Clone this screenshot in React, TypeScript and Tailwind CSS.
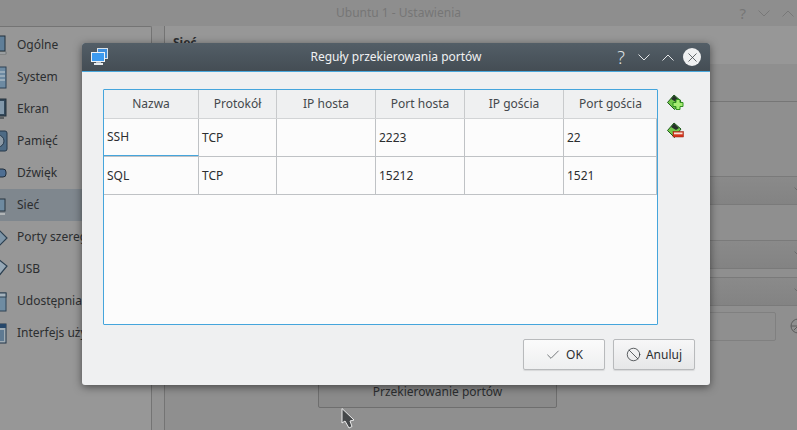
import type { ReactNode } from 'react';
import { Check, Ban, X } from 'lucide-react';

const navItems = ['Ogólne', 'System', 'Ekran', 'Pamięć', 'Dźwięk', 'Sieć', 'Porty szeregowe', 'USB', 'Udostępnianie', 'Interfejs użytkownika'];

const columns = [
  { label: 'Nazwa', width: 'w-[95px]' },
  { label: 'Protokół', width: 'w-[78px]' },
  { label: 'IP hosta', width: 'w-[99px]' },
  { label: 'Port hosta', width: 'w-[89px]' },
  { label: 'IP gościa', width: 'w-[99px]' },
  { label: 'Port gościa', width: 'flex-1' },
];

const rows = [
  ['SSH', 'TCP', '', '2223', '', '22'],
  ['SQL', 'TCP', '', '15212', '', '1521'],
];

// only the right edge of each settings icon is on screen
const navIcons: Record<string, ReactNode> = {
  Ogólne: (
    <>
      <rect x="-6" y="3" width="11" height="15" fill="#5f7e98" stroke="#22303c" />
      <rect x="-6" y="19" width="12" height="2" fill="#b5b8ba" stroke="#4a4f52" strokeWidth="0.5" />
    </>
  ),
  System: (
    <>
      <rect x="-6" y="2" width="12" height="21" fill="#6d8aa2" stroke="#2c4054" />
      <path d="M0 7 H5 M0 11 H5 M0 15 H5" stroke="#c3ccd2" />
    </>
  ),
  Ekran: (
    <>
      <rect x="-6" y="2" width="12" height="17" fill="#33485a" stroke="#26323c" />
      <rect x="-6" y="4" width="10" height="13" fill="#8298aa" />
      <path d="M-6 21 H4" stroke="#5a5f62" strokeWidth="2" />
    </>
  ),
  Pamięć: (
    <>
      <rect x="-6" y="2" width="13" height="20" rx="2" fill="#4d6a84" stroke="#26384a" />
      <circle cx="-2" cy="12" r="6" fill="#8c9aa6" stroke="#26384a" />
    </>
  ),
  Dźwięk: <rect x="-6" y="8" width="12" height="8" rx="3" fill="#4e6e92" stroke="#1f2c3a" />,
  Sieć: (
    <>
      <rect x="-6" y="6" width="11" height="12" fill="#6e8aa0" stroke="#28353f" />
      <path d="M-6 21 H5" stroke="#b0b4b6" strokeWidth="2" />
    </>
  ),
  'Porty szeregowe': <path d="M-4 2 L7 13 L-2 22 L-8 16 Z" fill="#7d95a8" stroke="#2b3f50" strokeWidth="1.2" />,
  USB: <path d="M-2 2 L7 9 L-2 20 L-8 14 Z" fill="#96a8b6" stroke="#2b3f50" strokeWidth="1.2" />,
  Udostępnianie: (
    <>
      <rect x="-6" y="4" width="12" height="18" fill="#6f8ca2" stroke="#2f4354" />
      <rect x="-6" y="4" width="12" height="4" fill="#a4b2bc" stroke="#2f4354" />
    </>
  ),
  'Interfejs użytkownika': (
    <>
      <rect x="-6" y="3" width="12" height="19" fill="#a0acb4" stroke="#23364a" />
      <rect x="-6" y="3" width="12" height="4" fill="#26476a" />
      <rect x="0" y="9" width="4" height="11" fill="#5f7a92" />
    </>
  ),
};

function MonitorIcon() {
  return (
    <svg width="18" height="18" viewBox="0 0 18 18">
      <rect x="6" y="0" width="11" height="11" fill="#d9e2ea" />
      <rect x="7" y="1" width="9" height="9" fill="#3f8fdc" />
      <rect x="0" y="4" width="14" height="10" fill="#eef2f6" />
      <rect x="1" y="5" width="12" height="8" fill="#3d9bf0" />
      <rect x="5" y="14" width="5" height="1" fill="#b6bec4" />
      <rect x="3" y="15" width="9" height="2" fill="#e6eaee" />
    </svg>
  );
}

function PortRuleIcon({ remove }: { remove?: boolean }) {
  return (
    <svg width="17" height="17" viewBox="0 0 17 17">
      <path d="M0.5 8.5 L7 1 L14 7 L7.5 15.5 Z" fill="#74c84c" stroke="#1c5a1c" />
      <path d="M4 5 L7 1.5 L12 6 L9 8 Z" fill="#26302a" />
      {remove ? (
        <>
          <rect x="6" y="9.5" width="10.5" height="5.5" fill="#d6341c" stroke="#8e2010" strokeWidth="0.5" />
          <rect x="7" y="10.5" width="8.5" height="1.8" fill="#f6e2d8" />
        </>
      ) : (
        <path d="M9 5.5 H13 V8.5 H16 V12.5 H13 V15.5 H9 V12.5 H6 V8.5 H9 Z" fill="#a6ec72" stroke="#2f8f1e" />
      )}
    </svg>
  );
}

function Chevron({ up, color }: { up?: boolean; color: string }) {
  return (
    <svg width="12" height="7" viewBox="0 0 12 7" fill="none" stroke={color} strokeWidth="1">
      <path d={up ? 'M0.5 6.5 L6 1 L11.5 6.5' : 'M0.5 0.5 L6 6 L11.5 0.5'} />
    </svg>
  );
}

function CollapsedBand() {
  return (
    <div className="h-[29px] flex items-center justify-end bg-gradient-to-b from-[#8a8a8a] to-[#838383] border-t border-b border-[#7a7a7a] overflow-hidden">
      <div className="-mr-[9px]"><Chevron color="#6a6a6a" /></div>
    </div>
  );
}

export default function App() {
  return (
    <div className="relative w-[797px] h-[430px] overflow-hidden bg-[#939393] text-[12px] text-[#2c2e30] font-['Noto_Sans',sans-serif]">
      {/* dimmed parent window */}
      <div className="h-[26px] grid grid-cols-[1fr_auto_1fr] items-center text-[#767676] bg-[#8e8e8e]">
        <div />
        <div>Ubuntu 1 - Ustawienia</div>
        <div className="flex items-center justify-end gap-[12px] pr-[3px]">
          <span className="text-[15px] leading-none">?</span>
          <Chevron color="#787878" />
          <Chevron up color="#787878" />
        </div>
      </div>
      <div className="flex h-[404px]">
        <div className="w-[152px] shrink-0 border-r border-t border-[#747474] rounded-tr-[2px] pt-[2px] bg-[#979797]">
          {navItems.map((item) => (
            <div key={item} className={`h-[32px] flex items-center gap-[9px] overflow-hidden whitespace-nowrap ${item === 'Sieć' ? 'bg-[#7f878e]' : ''}`}>
              <svg className="shrink-0" width="8" height="24" viewBox="0 0 8 24">{navIcons[item]}</svg>
              <span>{item}</span>
            </div>
          ))}
        </div>
        <div className="flex-1 ml-[12px] border-l border-[#747474] bg-[#8f8f8f] min-w-0">
          <div className="h-[38px] bg-[#979797] pl-2 pt-2 font-bold">Sieć</div>
          <div className="h-[38px] border-b border-[#767676]" />
          <div className="h-[74px]" />
          <CollapsedBand />
          <div className="h-[35px]" />
          <CollapsedBand />
          <div className="h-[8px]" />
          <CollapsedBand />
          <div className="flex justify-end items-center h-[40px] overflow-hidden">
            <div className="w-[100px] h-[29px] border border-[#808080] rounded-[2px]" />
            <svg className="ml-[14px] -mr-[9px] shrink-0" width="16" height="16" viewBox="0 0 16 16" fill="none" stroke="#5c5c5c">
              <circle cx="8" cy="8" r="7" />
              <path d="M1 8 H15 M4 12 L8 8 L12 12" />
            </svg>
          </div>
          <div className="ml-[153px] w-[239px] h-[62px] border border-[#6e6e6e] rounded-[2px] bg-[#8a8a8a] flex items-end justify-center pb-[6px]">
            Przekierowanie portów
          </div>
        </div>
      </div>

      {/* port forwarding dialog */}
      <div className="absolute left-[82px] top-[43px] w-[628px] h-[342px] bg-[#eff0f1] rounded-[3px] shadow-[0_2px_8px_rgba(0,0,0,0.5)] flex flex-col overflow-hidden">
        <div className="h-[29px] shrink-0 grid grid-cols-[1fr_auto_1fr] items-center border-b border-[#4aa8dc] bg-gradient-to-b from-[#535e67] to-[#444d54] text-[#f0f1f2]">
          <div className="ml-[9px]"><MonitorIcon /></div>
          <div>Reguły przekierowania portów</div>
          <div className="flex items-center justify-end pr-[9px] text-[#dfe1e3]">
            <span className="text-[18px] leading-none font-light">?</span>
            <div className="ml-[13px]"><Chevron color="#e4e6e8" /></div>
            <div className="ml-[12px]"><Chevron up color="#e4e6e8" /></div>
            <div className="ml-[9px] w-[18px] h-[18px] rounded-full bg-[#eff0f1] flex items-center justify-center text-[#3c4348]">
              <X size={15} strokeWidth={1.25} />
            </div>
          </div>
        </div>

        <div className="flex pl-[21px] pt-[17px]">
          <div className="w-[555px] h-[236px] border border-[#45a5dc] rounded-[1px] bg-[#fcfcfc] flex flex-col">
            <div className="flex h-[29px] bg-[#eff0f1] border-b border-[#d2d4d6] text-[#44484c]">
              {columns.map((col) => (
                <div key={col.label} className={`${col.width} flex items-center justify-center border-r border-[#c8cacc] last:border-r-0`}>
                  {col.label}
                </div>
              ))}
            </div>
            {rows.map((row, i) => (
              <div key={row[0]} className="flex h-[38px] border-b border-[#bfc2c5]">
                {row.map((cell, j) => (
                  <div key={j} className={`${columns[j].width} flex items-center pl-[3px] border-r border-[#bfc2c5] ${i === 0 && j === 0 ? 'border-b border-b-[#45a5dc]' : ''}`}>
                    {cell}
                  </div>
                ))}
              </div>
            ))}
          </div>
          <div className="ml-[9px] flex flex-col gap-[11px] pt-[5px]">
            <PortRuleIcon />
            <PortRuleIcon remove />
          </div>
        </div>

        <div className="flex justify-end gap-[8px] pr-[15px] mt-[14px]">
          <button className="w-[82px] h-[31px] border border-[#b8babc] rounded-[2px] bg-gradient-to-b from-[#fbfbfb] to-[#eeeff0] flex items-center justify-center gap-[5px] shadow-[0_1px_1px_rgba(0,0,0,0.1)]">
            <Check size={16} strokeWidth={1} className="text-[#33383c]" />
            OK
          </button>
          <button className="w-[82px] h-[31px] border border-[#b8babc] rounded-[2px] bg-gradient-to-b from-[#f7f7f8] to-[#e6e7e8] flex items-center justify-center gap-[5px] shadow-[0_1px_1px_rgba(0,0,0,0.1)]">
            <Ban size={15} strokeWidth={1.25} className="text-[#33383c]" />
            Anuluj
          </button>
        </div>
      </div>

      {/* mouse cursor */}
      <svg className="absolute left-[341px] top-[408px]" width="14" height="21" viewBox="0 0 14 21">
        <path d="M1 0.5 L1 15 L4 13 L8 20 L11 18.5 L9 13 L13 12 Z" fill="#45484a" stroke="#ececec" strokeWidth="1" />
      </svg>
    </div>
  );
}
